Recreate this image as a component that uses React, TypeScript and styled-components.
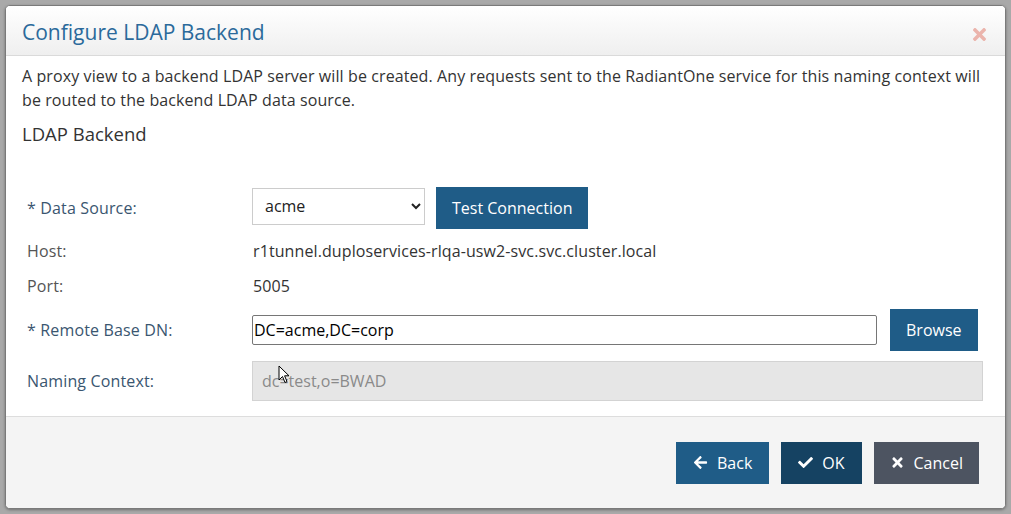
import styled, { createGlobalStyle } from "styled-components";
import { FaArrowLeft, FaCheck, FaTimes } from "react-icons/fa";

const GlobalStyle = createGlobalStyle`
    html, body {
        margin: 0;
        padding: 0;
        background: #a9a9a9;
        font-family: "Open Sans", "Liberation Sans", sans-serif;
    }
    * {
        box-sizing: border-box;
    }
`;

export default function App() {
    return (
        <Page>
            <GlobalStyle />
            <Dialog>
                <Header>
                    <Title>Configure LDAP Backend</Title>
                    <CloseButton aria-label="close">
                        <FaTimes />
                    </CloseButton>
                </Header>
                <Body>
                    <Description>
                        A proxy view to a backend LDAP server will be created. Any requests sent to the RadiantOne
                        service for this naming context will be routed to the backend LDAP data source.
                    </Description>
                    <SectionTitle>LDAP Backend</SectionTitle>
                    <Form>
                        <Label>* Data Source:</Label>
                        <Field gap={11}>
                            <Select defaultValue="acme">
                                <option value="acme">acme</option>
                            </Select>
                            <Button>Test Connection</Button>
                        </Field>

                        <Label plain>Host:</Label>
                        <Value>r1tunnel.duploservices-rlqa-usw2-svc.svc.cluster.local</Value>

                        <Label plain>Port:</Label>
                        <Value>5005</Value>

                        <Label>* Remote Base DN:</Label>
                        <Field gap={13}>
                            <TextInput defaultValue="DC=acme,DC=corp" />
                            <Button>Browse</Button>
                        </Field>

                        <Label>Naming Context:</Label>
                        <Field gap={0}>
                            <ReadOnlyBox>
                                dc=test,o=BWAD
                                <Cursor viewBox="0 0 12 19">
                                    <path
                                        d="M1 1 L1 15 L4.5 11.5 L7 17.5 L9 16.6 L6.6 10.8 L11 10.8 Z"
                                        fill="#fff"
                                        stroke="#000"
                                        strokeWidth="1"
                                        strokeLinejoin="round"
                                    />
                                </Cursor>
                            </ReadOnlyBox>
                        </Field>
                    </Form>
                </Body>
                <Footer>
                    <Button wide>
                        <FaArrowLeft /> Back
                    </Button>
                    <Button wide variant="dark">
                        <FaCheck /> OK
                    </Button>
                    <Button variant="gray">
                        <FaTimes /> Cancel
                    </Button>
                </Footer>
            </Dialog>
        </Page>
    );
}

const Page = styled.div`
    width: 1011px;
    height: 514px;
    padding: 5px;
    overflow: hidden;
`;

const Dialog = styled.div`
    width: 1001px;
    height: 504px;
    display: flex;
    flex-direction: column;
    background: #ffffff;
    border: 1px solid #7a7a7a;
    border-radius: 5px;
    box-shadow: 0 1px 3px rgba(0, 0, 0, 0.35);
    overflow: hidden;
`;

const Header = styled.div`
    height: 50px;
    flex-shrink: 0;
    display: flex;
    align-items: center;
    justify-content: space-between;
    padding: 0 16px 0 16px;
    background: linear-gradient(to bottom, #ffffff, #efefef);
    border-bottom: 1px solid #dadada;
`;

const Title = styled.div`
    font-size: 21px;
    color: #2b6a9b;
    padding-top: 2px;
`;

const CloseButton = styled.button`
    background: transparent;
    border: none;
    padding: 0;
    margin-top: 7px;
    color: #ebb4ac;
    font-size: 19px;
    display: flex;
    cursor: pointer;
`;

const Body = styled.div`
    flex: 1;
    padding: 8px 16px 0 16px;
    color: #333333;
`;

const Description = styled.p`
    margin: 0;
    font-size: 16px;
    line-height: 24px;
    letter-spacing: 0.1px;
`;

const SectionTitle = styled.h4`
    margin: 10px 0 0 0;
    font-size: 18.5px;
    font-weight: 400;
    line-height: 24px;
    color: #333333;
`;

const Form = styled.div`
    display: grid;
    grid-template-columns: 225px 731px;
    row-gap: 10px;
    align-items: center;
    margin-top: 41px;
    padding-left: 5px;
`;

const Label = styled.div<{ plain?: boolean }>`
    font-size: 16px;
    line-height: 25px;
    letter-spacing: 0.15px;
    color: ${(p) => (p.plain ? "#555555" : "#3a5670")};
`;

const Value = styled.div`
    font-size: 16px;
    line-height: 25px;
    letter-spacing: 0.1px;
    color: #333333;
    padding-left: 1px;
`;

const Field = styled.div<{ gap: number }>`
    display: flex;
    align-items: center;
    gap: ${(p) => p.gap}px;
`;

const Select = styled.select`
    width: 173px;
    height: 37px;
    padding: 0 6px 0 8px;
    border: 1px solid #cccccc;
    border-radius: 0;
    background: #ffffff;
    font-family: "Open Sans", "Liberation Sans", sans-serif;
    font-size: 16px;
    color: #222222;
    margin-bottom: 4px;
`;

const TextInput = styled.input`
    width: 625px;
    height: 30px;
    padding: 0 1px;
    border: 1px solid #767676;
    border-radius: 2px;
    font-family: "Open Sans", "Liberation Sans", sans-serif;
    font-size: 16px;
    color: #000000;
    outline: none;
`;

const ReadOnlyBox = styled.div`
    position: relative;
    width: 731px;
    height: 40px;
    display: flex;
    align-items: center;
    padding: 0 9px;
    background: #e6e6e6;
    border: 1px solid #d3d3d3;
    font-size: 16px;
    color: #8a8a8a;
`;

const Cursor = styled.svg`
    position: absolute;
    left: 25px;
    top: 3px;
    width: 12px;
    height: 19px;
`;

const Button = styled.button<{ variant?: "dark" | "gray"; wide?: boolean }>`
    height: 42px;
    display: inline-flex;
    align-items: center;
    gap: 9px;
    padding: 0 ${(p) => (p.wide ? "17px" : "16px")};
    border: none;
    border-radius: 0;
    background: ${(p) => (p.variant === "dark" ? "#154262" : p.variant === "gray" ? "#4d5461" : "#1f5c87")};
    color: #ffffff;
    font-family: "Open Sans", "Liberation Sans", sans-serif;
    font-size: 16px;
    white-space: nowrap;
    cursor: pointer;

    svg {
        font-size: 15px;
    }
`;

const Footer = styled.div`
    height: 92px;
    flex-shrink: 0;
    display: flex;
    align-items: center;
    justify-content: flex-end;
    gap: 12px;
    padding: 0 26px 0 0;
    background: #f4f4f4;
    border-top: 1px solid #dddddd;
`;
